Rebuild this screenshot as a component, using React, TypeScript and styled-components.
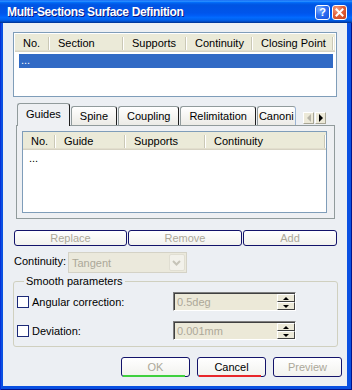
import React from "react";
import styled, { createGlobalStyle } from "styled-components";

const Global = createGlobalStyle`
  html, body { margin: 0; padding: 0; background: #fff; overflow: hidden; }
  body { font-family: "Liberation Sans", Arial, sans-serif; font-size: 11px; color: #000; }
  * { box-sizing: border-box; }
`;

const Window = styled.div`
  width: 352px;
  height: 390px;
  display: flex;
  flex-direction: column;
`;

const TitleBar = styled.div`
  height: 23px;
  flex: none;
  display: flex;
  align-items: center;
  padding: 1px 5px 0 7px;
  background: linear-gradient(
    to bottom,
    #0058ee 0%,
    #3a93ff 4%,
    #288eff 6%,
    #127dff 8%,
    #036ffc 10%,
    #0262ee 14%,
    #0057e5 20%,
    #0054e3 24%,
    #0055eb 56%,
    #005bf5 66%,
    #026afe 76%,
    #0062ef 86%,
    #0052d6 92%,
    #0040ab 96%,
    #003092 100%
  );
`;

const Title = styled.div`
  flex: 1;
  color: #fff;
  font: bold 12px "Liberation Sans", Arial, sans-serif;
  letter-spacing: -0.35px;
  text-shadow: 1px 1px #0a1883;
  white-space: nowrap;
`;

const TitleButtons = styled.div`
  display: flex;
  gap: 2px;
`;

const TitleButton = styled.div<{ $kind: "help" | "close" }>`
  width: 15px;
  height: 15px;
  border: 1px solid #fff;
  border-radius: 3px;
  display: flex;
  align-items: center;
  justify-content: center;
  color: #fff;
  font: bold 11px "Liberation Sans", Arial, sans-serif;
  background: ${(p) =>
    p.$kind === "close"
      ? "radial-gradient(circle at 30% 25%, #f5a184 0%, #e2603a 45%, #c5401a 100%)"
      : "radial-gradient(circle at 30% 25%, #7fb0ff 0%, #2f70f2 45%, #1650dc 100%)"};
`;

const Frame = styled.div`
  flex: 1;
  display: flex;
  padding: 0 5px 4px 3px;
  background: #0a50e2;
  box-shadow: inset 1px 0 #0831d9, inset -1px 0 #00138c, inset 0 -1px #00138c;
`;

const Client = styled.div`
  flex: 1;
  display: flex;
  flex-direction: column;
  align-items: flex-start;
  padding: 9px 0 0 10px;
  background: #eceff3;
`;

const ListBox = styled.div<{ $w: number; $h: number; $pad: number }>`
  width: ${(p) => p.$w}px;
  height: ${(p) => p.$h}px;
  flex: none;
  display: flex;
  flex-direction: column;
  border: 1px solid #7f9db9;
  background: #fff;
  padding: ${(p) => p.$pad}px;
  overflow: hidden;
`;

const Header = styled.div`
  display: flex;
  height: 18px;
  flex: none;
  background: #ebead8;
  box-shadow: inset 0 -1px #d6d2c2, inset 0 -2px #e2decd;
`;

const HeaderCell = styled.div<{ $w: number }>`
  width: ${(p) => p.$w}px;
  flex: none;
  display: flex;
`;

const HeaderLabel = styled.div`
  flex: 1;
  display: flex;
  align-items: center;
  padding: 0 0 1px 8px;
  white-space: nowrap;
  overflow: hidden;
`;

const Sep = styled.div`
  width: 2px;
  margin: 3px 0 2px;
  background: linear-gradient(to right, #cac8b6 1px, #ffffff 1px);
`;

const Row = styled.div<{ $selected?: boolean }>`
  height: 14px;
  margin: 2px 2px 0 4px;
  padding-left: 2px;
  line-height: 13px;
  background: ${(p) => (p.$selected ? "#316ac5" : "transparent")};
  color: ${(p) => (p.$selected ? "#fff" : "#000")};
`;

const TabArea = styled.div`
  width: 319px;
  margin: 6px 0 0 3px;
  display: flex;
  flex-direction: column;
`;

const TabRow = styled.div`
  height: 23px;
  margin-bottom: -1px;
  display: flex;
  align-items: flex-end;
  padding-left: 1px;
  position: relative;
  z-index: 1;
`;

const TabViewport = styled.div`
  width: 280px;
  height: 23px;
  display: flex;
  align-items: flex-end;
  gap: 1px;
  overflow: hidden;
`;

const Tab = styled.div<{ $active?: boolean }>`
  flex: none;
  height: ${(p) => (p.$active ? 23 : 19)}px;
  margin-bottom: ${(p) => (p.$active ? 0 : 1)}px;
  padding: 0 8px ${(p) => (p.$active ? 2 : 0)}px;
  display: flex;
  align-items: center;
  justify-content: center;
  white-space: nowrap;
  border: 1px solid #919b9c;
  border-right-color: #1e1e1e;
  border-bottom: none;
  border-radius: 3px 3px 0 0;
  background: ${(p) => (p.$active ? "#eef0f3" : "linear-gradient(#ffffff, #ecebe6)")};
`;

const ClipTab = styled(Tab)`
  padding: 0 1px 0 1px;
  justify-content: flex-start;
  border-right-color: #9ab4d4;
`;

const Arrows = styled.div`
  display: flex;
  gap: 1px;
  align-self: flex-start;
  margin: 9px 0 0 6px;
`;

const ArrowButton = styled.div`
  width: 11px;
  height: 12px;
  display: flex;
  align-items: center;
  justify-content: center;
  background: #ece9d8;
  border: 1px solid;
  border-color: #fff #a7a595 #a7a595 #fff;
`;

const Panel = styled.div`
  height: 94px;
  border: 1px solid #919b9c;
  background: #eef0f3;
  padding: 5px 7px 5px 5px;
  display: flex;
`;

const ActionRow = styled.div`
  display: flex;
  gap: 1px;
  margin: 11px 0 0 1px;
`;

const Button = styled.div<{ $w: number; $h: number; $disabled?: boolean; $accent?: string }>`
  position: relative;
  width: ${(p) => p.$w}px;
  height: ${(p) => p.$h}px;
  flex: none;
  display: flex;
  align-items: center;
  justify-content: center;
  border: 1px solid #13136a;
  border-radius: 3px;
  background: linear-gradient(#ffffff, #f2f2ee);
  color: ${(p) => (p.$disabled ? "#aca899" : "#000")};
  ${(p) =>
    p.$accent
      ? `&::after { content: ""; position: absolute; left: 1px; right: 4px; bottom: -1px; height: 2px; background: ${p.$accent}; }`
      : ""}
`;

const ContinuityRow = styled.div`
  display: flex;
  align-items: center;
  gap: 2px;
  margin: 6px 0 0 1px;
`;

const Label = styled.span`
  white-space: nowrap;
  margin-top: -4px;
`;

const Combo = styled.div`
  width: 119px;
  height: 21px;
  display: flex;
  align-items: stretch;
  border: 1px solid #d4d2c6;
  background: #ebe9dc;
  color: #aca899;
`;

const ComboText = styled.div`
  flex: 1;
  display: flex;
  align-items: center;
  padding-left: 3px;
`;

const ComboButton = styled.div`
  width: 16px;
  margin: 1px;
  display: flex;
  align-items: center;
  justify-content: center;
  border: 1px solid #e0ded2;
  border-radius: 2px;
  background: #f2f1ea;
`;

const Group = styled.fieldset`
  width: 325px;
  margin: 2px 0 0 0;
  padding: 4px 0 6px 3px;
  border: 1px solid #d0d0bf;
  border-radius: 3px;
  display: flex;
  flex-direction: column;
  gap: 10px;
`;

const Legend = styled.legend`
  margin-left: 7px;
  padding: 0 2px;
  line-height: 13px;
`;

const ParamRow = styled.div`
  display: grid;
  grid-template-columns: 156px 123px;
  align-items: center;
  height: 19px;
`;

const CheckLabel = styled.div`
  display: flex;
  align-items: center;
  gap: 3px;
`;

const CheckBox = styled.div`
  width: 12px;
  height: 12px;
  border: 1px solid #1c2a78;
  background: #fff;
`;

const Field = styled.div`
  height: 19px;
  display: flex;
  border: 1px solid;
  border-color: #7f7f7f #ffffff #ffffff #7f7f7f;
  box-shadow: inset 1px 1px #404040;
  background: #ece9d8;
  color: #aca899;
`;

const FieldText = styled.div`
  flex: 1;
  display: flex;
  align-items: center;
  padding-left: 3px;
`;

const Spin = styled.div`
  width: 18px;
  display: flex;
  flex-direction: column;
  padding: 1px 0 0 0;
`;

const SpinHalf = styled.div`
  flex: 1;
  display: flex;
  align-items: center;
  justify-content: center;
  background: #ece9d8;
  border: 1px solid;
  border-color: #ffffff #404040 #404040 #ffffff;
`;

const BottomBar = styled.div`
  display: flex;
  gap: 7px;
  margin: 10px 0 0 108px;
`;

const Chevron = () => (
  <svg width="9" height="6" viewBox="0 0 9 6">
    <path d="M1 1 L4.5 4.5 L8 1" stroke="#c6c4b8" strokeWidth="2" fill="none" />
  </svg>
);

const Tri = ({ dir, color }: { dir: "left" | "right" | "up" | "down"; color: string }) => {
  const horiz = dir === "left" || dir === "right";
  const pts = {
    left: "5,0 1,4 5,8",
    right: "1,0 5,4 1,8",
    up: "0,4 3,1 6,4",
    down: "0,1 3,4 6,1",
  }[dir];
  return (
    <svg width={6} height={horiz ? 8 : 5} viewBox={horiz ? "0 0 6 8" : "0 0 6 5"}>
      <polygon points={pts} fill={color} />
    </svg>
  );
};

const CloseX = () => (
  <svg width="9" height="9" viewBox="0 0 9 9">
    <path d="M1.5 1.5 L7.5 7.5 M7.5 1.5 L1.5 7.5" stroke="#fff" strokeWidth="2" strokeLinecap="square" />
  </svg>
);

const topCols: [string, number][] = [
  ["No.", 35],
  ["Section", 74],
  ["Supports", 63],
  ["Continuity", 66],
  ["Closing Point", 81],
];

const guideCols: [string, number][] = [
  ["No.", 33],
  ["Guide", 70],
  ["Supports", 80],
  ["Continuity", 120],
];

const HeaderRow = ({ cols }: { cols: [string, number][] }) => (
  <Header>
    {cols.map(([name, w]) => (
      <HeaderCell key={name} $w={w}>
        <HeaderLabel>{name}</HeaderLabel>
        <Sep />
      </HeaderCell>
    ))}
  </Header>
);

const Param = ({ label, value }: { label: string; value: string }) => (
  <ParamRow>
    <CheckLabel>
      <CheckBox />
      <span>{label}</span>
    </CheckLabel>
    <Field>
      <FieldText>{value}</FieldText>
      <Spin>
        <SpinHalf>
          <Tri dir="up" color="#000" />
        </SpinHalf>
        <SpinHalf>
          <Tri dir="down" color="#000" />
        </SpinHalf>
      </Spin>
    </Field>
  </ParamRow>
);

export default function App() {
  return (
    <>
      <Global />
      <Window>
        <TitleBar>
          <Title>Multi-Sections Surface Definition</Title>
          <TitleButtons>
            <TitleButton $kind="help">?</TitleButton>
            <TitleButton $kind="close">
              <CloseX />
            </TitleButton>
          </TitleButtons>
        </TitleBar>
        <Frame>
          <Client>
            <ListBox $w={324} $h={65} $pad={1}>
              <HeaderRow cols={topCols} />
              <Row $selected>...</Row>
            </ListBox>

            <TabArea>
              <TabRow>
                <TabViewport>
                  <Tab $active>Guides</Tab>
                  <Tab>Spine</Tab>
                  <Tab>Coupling</Tab>
                  <Tab>Relimitation</Tab>
                  <ClipTab>Canoni</ClipTab>
                </TabViewport>
                <Arrows>
                  <ArrowButton>
                    <Tri dir="left" color="#b5b3a6" />
                  </ArrowButton>
                  <ArrowButton>
                    <Tri dir="right" color="#000" />
                  </ArrowButton>
                </Arrows>
              </TabRow>
              <Panel>
                <ListBox $w={305} $h={82} $pad={0}>
                  <HeaderRow cols={guideCols} />
                  <Row>...</Row>
                </ListBox>
              </Panel>
            </TabArea>

            <ActionRow>
              <Button $w={113} $h={16} $disabled>Replace</Button>
              <Button $w={114} $h={16} $disabled>Remove</Button>
              <Button $w={94} $h={16} $disabled>Add</Button>
            </ActionRow>

            <ContinuityRow>
              <Label>Continuity:</Label>
              <Combo>
                <ComboText>Tangent</ComboText>
                <ComboButton>
                  <Chevron />
                </ComboButton>
              </Combo>
            </ContinuityRow>

            <Group>
              <Legend>Smooth parameters</Legend>
              <Param label="Angular correction:" value="0.5deg" />
              <Param label="Deviation:" value="0.001mm" />
            </Group>

            <BottomBar>
              <Button $w={69} $h={20} $disabled $accent="#3fd03f">OK</Button>
              <Button $w={69} $h={20} $accent="#e8262a">Cancel</Button>
              <Button $w={69} $h={20} $disabled>Preview</Button>
            </BottomBar>
          </Client>
        </Frame>
      </Window>
    </>
  );
}
